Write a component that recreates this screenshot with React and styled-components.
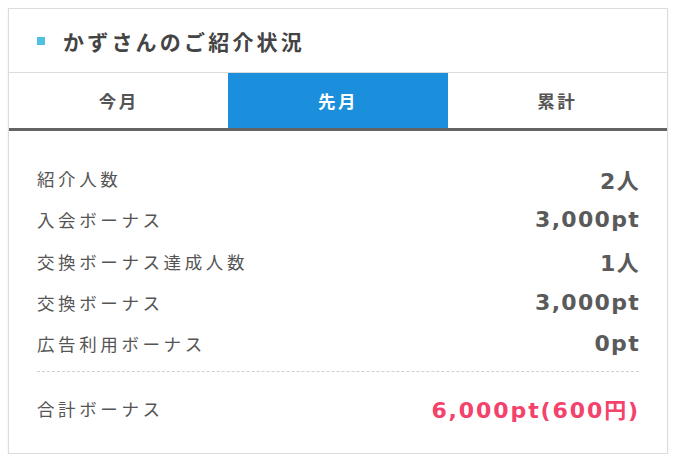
import React from 'react'
import styled, { createGlobalStyle } from 'styled-components'

const GlobalStyle = createGlobalStyle`
    html, body {
        margin: 0;
        padding: 0;
        background: #fff;
    }
    body {
        font-family: "Noto Sans CJK JP", "Noto Sans", sans-serif;
        color: #555;
    }
`

const tabs = ['今月', '先月', '累計']

const rows = [
    { label: '紹介人数', value: '2人' },
    { label: '入会ボーナス', value: '3,000pt' },
    { label: '交換ボーナス達成人数', value: '1人' },
    { label: '交換ボーナス', value: '3,000pt' },
    { label: '広告利用ボーナス', value: '0pt' },
]

const App = () => {
    const active = 1

    return (
        <>
            <GlobalStyle />
            <Card>
                <Header>
                    <Marker />
                    <h2>かずさんのご紹介状況</h2>
                </Header>
                <Tabs>
                    {tabs.map((t, i) => (
                        <Tab key={t} $active={i === active}>{t}</Tab>
                    ))}
                </Tabs>
                <Body>
                    {rows.map(r => (
                        <Row key={r.label}>
                            <Label>{r.label}</Label>
                            <Value>{r.value}</Value>
                        </Row>
                    ))}
                    <Divider />
                    <Row>
                        <Label>合計ボーナス</Label>
                        <Value $total>6,000pt(600円)</Value>
                    </Row>
                </Body>
            </Card>
        </>
    )
}

// styled
const Card = styled.div`
    width: 660px;
    height: 446px;
    box-sizing: border-box;
    margin: 8px 0 0 8px;
    border: 1px solid #dcdcdc;
    background: #fff;
    box-shadow: 0 1px 2px rgba(0, 0, 0, 0.08);
`

const Header = styled.div`
    display: flex;
    align-items: center;
    height: 63px;
    padding-left: 28px;
    border-bottom: 1px solid #dcdcdc;
    h2 {
        margin: 0 0 0 18px;
        font-size: 21px;
        font-weight: 700;
        letter-spacing: 3.2px;
        color: #444;
    }
`

const Marker = styled.span`
    display: block;
    width: 8px;
    height: 8px;
    background: #4fc1e0;
`

const Tabs = styled.div`
    display: grid;
    grid-template-columns: repeat(3, 1fr);
    border-bottom: 3px solid #636363;
`

const Tab = styled.div`
    display: flex;
    align-items: center;
    justify-content: center;
    height: 55px;
    font-size: 17.5px;
    font-weight: 700;
    letter-spacing: 2.5px;
    color: ${p => (p.$active ? '#fff' : '#555')};
    background: ${p => (p.$active ? '#1b8fdb' : '#fff')};
`

const Body = styled.div`
    padding: 27px 28px 0;
`

const Row = styled.div`
    display: flex;
    align-items: center;
    justify-content: space-between;
    height: 41.3px;
`

const Label = styled.span`
    font-size: 17.5px;
    letter-spacing: 3.6px;
    color: #555;
`

const Value = styled.span`
    font-family: "DejaVu Sans", "Noto Sans CJK JP", sans-serif;
    font-size: 22px;
    font-weight: 700;
    letter-spacing: ${p => (p.$total ? '1.9px' : '1.3px')};
    margin-right: -1px;
    color: ${p => (p.$total ? '#f3426b' : '#5a5a5a')};
`

const Divider = styled.div`
    margin: 7px 0 15px;
    border-top: 1px dashed #d0d0d0;
`

export default App
